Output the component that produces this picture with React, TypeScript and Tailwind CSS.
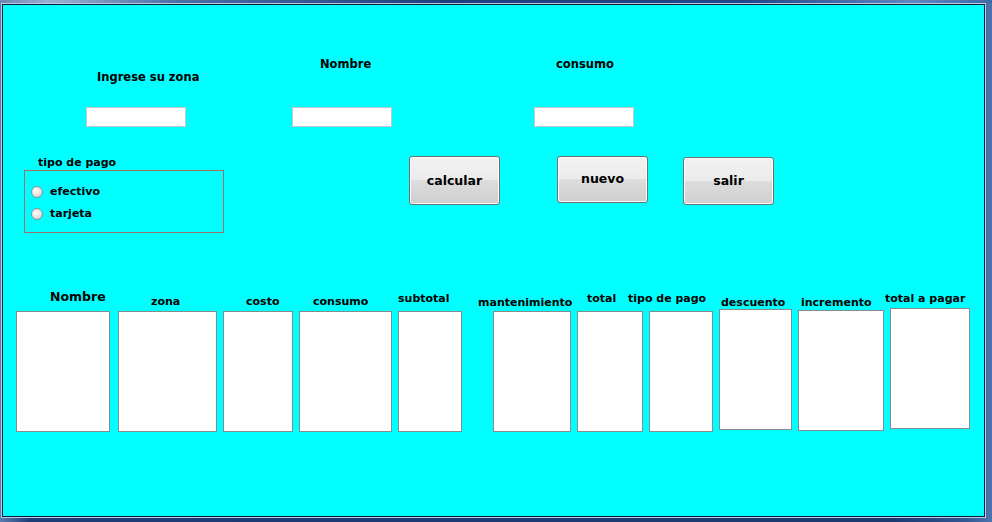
import React from 'react';

const font = 'font-["DejaVu_Sans",Verdana,sans-serif] font-bold text-black';

type Col = {
  label: string;
  col: string;
  lbl: string;
  box: string;
};

const columns: Col[] = [
  { label: 'Nombre', col: 'ml-[13px] w-[94px]', lbl: 'h-[23px] pt-[2px] ml-[34px] text-[12.5px]', box: 'h-[121px]' },
  { label: 'zona', col: 'ml-[8px] w-[99px]', lbl: 'h-[23px] pt-[7px] ml-[33px] text-[11px]', box: 'h-[121px]' },
  { label: 'costo', col: 'ml-[6px] w-[70px]', lbl: 'h-[23px] pt-[7px] ml-[23px] text-[11px]', box: 'h-[121px]' },
  { label: 'consumo', col: 'ml-[6px] w-[93px]', lbl: 'h-[23px] pt-[7px] ml-[14px] text-[11px]', box: 'h-[121px]' },
  { label: 'subtotal', col: 'ml-[6px] w-[64px]', lbl: 'h-[23px] pt-[4px] ml-0 text-[11px]', box: 'h-[121px]' },
  { label: 'mantenimiento', col: 'ml-[31px] w-[78px]', lbl: 'h-[23px] pt-[8px] -ml-[15px] text-[11px]', box: 'h-[121px]' },
  { label: 'total', col: 'ml-[6px] w-[66px]', lbl: 'h-[23px] pt-[4px] ml-[10px] text-[11px]', box: 'h-[121px]' },
  { label: 'tipo de pago', col: 'ml-[6px] w-[64px]', lbl: 'h-[23px] pt-[4px] -ml-[21px] text-[11px]', box: 'h-[121px]' },
  { label: 'descuento', col: 'ml-[6px] w-[73px]', lbl: 'h-[21px] pt-[8px] ml-[2px] text-[11px]', box: 'h-[121px]' },
  { label: 'incremento', col: 'ml-[6px] w-[86px]', lbl: 'h-[22px] pt-[8px] ml-[3px] text-[11px]', box: 'h-[121px]' },
  { label: 'total a pagar', col: 'ml-[6px] w-[80px]', lbl: 'h-[20px] pt-[4px] -ml-[5px] text-[11px]', box: 'h-[121px]' },
];

function TextBox() {
  return <div className="mt-auto h-[20px] w-[100px] bg-white border border-[#c4c8cc]" />;
}

function Radio({ label }: { label: string }) {
  return (
    <div className="flex items-center h-[12px]">
      <span className="w-[12px] h-[12px] rounded-full border border-[#8e8f8f] bg-[radial-gradient(circle_at_40%_35%,#ffffff_0%,#e8e8e8_45%,#c9c9c9_100%)]" />
      <span className="ml-[7px] text-[11px] leading-[12px]">{label}</span>
    </div>
  );
}

function WinButton({ label, cls }: { label: string; cls: string }) {
  return (
    <button
      className={
        'flex items-center justify-center w-[91px] rounded-[3px] border border-[#707070] shadow-[inset_0_0_0_1px_#fbfbfb] bg-[linear-gradient(#f2f2f2_0%,#ebebeb_50%,#dddddd_50%,#cfcfcf_100%)] text-[12.5px] ' +
        cls
      }
    >
      {label}
    </button>
  );
}

export default function App() {
  return (
    <div className="w-[992px] h-[522px] overflow-hidden [background:linear-gradient(90deg,#6c87b6_0%,#9bb1d2_5%,#4a6ea6_18%,#1f3f7c_45%,#21468a_75%,#5f86bf_92%,#3f6aa8_100%)_top/100%_3px_no-repeat,linear-gradient(90deg,#5d7db2_0%,#1f3d75_3%,#1c3a70_90%,#2f5591_97%,#4d74ad_100%)] pt-[3px] pl-[1px] pr-[6px] pb-[4px]">
      <div className="h-full border border-[#b9cae3]">
        <div className={'h-full border border-[#0f1d38] bg-[#00ffff] ' + font}>
          {/* entradas */}
          <div className="flex items-start pt-[52px]">
            <div className="flex flex-col h-[70px] w-[112px] ml-[83px]">
              <span className="mt-[13px] pl-[11px] text-[11.5px] leading-[14px] whitespace-nowrap">Ingrese su zona</span>
              <TextBox />
            </div>
            <div className="flex flex-col h-[70px] w-[100px] ml-[94px]">
              <span className="pl-[28px] text-[11.5px] leading-[14px] whitespace-nowrap">Nombre</span>
              <TextBox />
            </div>
            <div className="flex flex-col h-[70px] w-[100px] ml-[142px]">
              <span className="pl-[22px] text-[11.5px] leading-[14px] whitespace-nowrap">consumo</span>
              <TextBox />
            </div>
          </div>

          {/* tipo de pago y botones */}
          <div className="flex items-start mt-[29px]">
            <div className="flex flex-col ml-[21px]">
              <span className="h-[14px] pl-[14px] text-[11px] leading-[14px]">tipo de pago</span>
              <div className="w-[200px] h-[63px] border border-[#a0716f] flex flex-col pl-[6px] pt-[15px] gap-[10px]">
                <Radio label="efectivo" />
                <Radio label="tarjeta" />
              </div>
            </div>
            <WinButton label="calcular" cls="ml-[185px] h-[49px] pt-[1px]" />
            <WinButton label="nuevo" cls="ml-[57px] h-[47px]" />
            <WinButton label="salir" cls="ml-[35px] mt-[1px] h-[48px]" />
          </div>

          {/* resultados */}
          <div className="flex items-start mt-[55px]">
            {columns.map((c) => (
              <div key={c.label} className={'flex flex-col ' + c.col}>
                <div className={'whitespace-nowrap leading-[14px] ' + c.lbl}>{c.label}</div>
                <div className={'w-full bg-white border border-[#8a8a8a] ' + c.box} />
              </div>
            ))}
          </div>
        </div>
      </div>
    </div>
  );
}
